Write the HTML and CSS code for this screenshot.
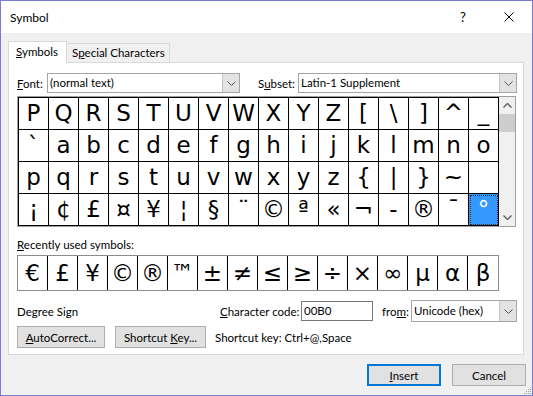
FILE: index.html
```html
<!DOCTYPE html>
<html lang="en">
<head>
    <meta charset="UTF-8">
    <meta name="viewport" content="width=device-width, initial-scale=1.0">
    <title>Symbol</title>
    <link rel="stylesheet" href="styles.css">
</head>
<body>
    <div class="window">
        <div class="titlebar">
            <span class="title">Symbol</span>
            <span class="caption-btn help">?</span>
            <span class="caption-btn">
                <svg width="10" height="10" viewBox="0 0 10 10"><path d="M0.5 0.5L9.5 9.5M9.5 0.5L0.5 9.5" stroke="#000" stroke-width="1" fill="none"/></svg>
            </span>
        </div>

        <div class="tabs">
            <div class="tab active"><u>S</u>ymbols</div>
            <div class="tab">S<u>p</u>ecial Characters</div>
        </div>

        <div class="panel">
            <div class="selects">
                <span class="lbl-font"><u>F</u>ont:</span>
                <div class="combo combo-font">
                    <span class="value">(normal text)</span>
                    <span class="drop"><svg width="9" height="5" viewBox="0 0 9 5"><path d="M0.5 0.5L4.5 4.5L8.5 0.5" fill="none" stroke="#555"/></svg></span>
                </div>
                <span class="lbl-subset">S<u>u</u>bset:</span>
                <div class="combo combo-subset">
                    <span class="value">Latin-1 Supplement</span>
                    <span class="drop"><svg width="9" height="5" viewBox="0 0 9 5"><path d="M0.5 0.5L4.5 4.5L8.5 0.5" fill="none" stroke="#555"/></svg></span>
                </div>
            </div>

            <div class="chars">
                <div class="grid">
                    <span>P</span><span>Q</span><span>R</span><span>S</span><span>T</span><span>U</span><span>V</span><span>W</span>
                    <span>X</span><span>Y</span><span>Z</span><span>[</span><span>\</span><span>]</span><span>^</span><span>_</span>
                    <span>`</span><span>a</span><span>b</span><span>c</span><span>d</span><span>e</span><span>f</span><span>g</span>
                    <span>h</span><span>i</span><span>j</span><span>k</span><span>l</span><span>m</span><span>n</span><span>o</span>
                    <span>p</span><span>q</span><span>r</span><span>s</span><span>t</span><span>u</span><span>v</span><span>w</span>
                    <span>x</span><span>y</span><span>z</span><span>{</span><span>|</span><span>}</span><span>~</span><span></span>
                    <span>¡</span><span>¢</span><span>£</span><span>¤</span><span>¥</span><span>¦</span><span>§</span><span>¨</span>
                    <span>©</span><span>ª</span><span>«</span><span>¬</span><span>-</span><span>®</span><span>¯</span><span class="sel">°</span>
                </div>
                <div class="scrollbar">
                    <span class="arrow"><svg width="9" height="5" viewBox="0 0 9 5"><path d="M0.5 4.5L4.5 0.5L8.5 4.5" fill="none" stroke="#606060" stroke-width="1.4"/></svg></span>
                    <span class="thumb"></span>
                    <span class="track"></span>
                    <span class="arrow"><svg width="9" height="5" viewBox="0 0 9 5"><path d="M0.5 0.5L4.5 4.5L8.5 0.5" fill="none" stroke="#606060" stroke-width="1.4"/></svg></span>
                </div>
            </div>

            <div class="recent-label"><u>R</u>ecently used symbols:</div>
            <div class="recent">
                <span>€</span><span>£</span><span>¥</span><span>©</span><span>®</span><span>™</span><span>±</span><span>≠</span>
                <span>≤</span><span>≥</span><span>÷</span><span>×</span><span>∞</span><span>µ</span><span>α</span><span>β</span>
            </div>

            <div class="info">
                <span class="degree">Degree Sign</span>
                <span class="lbl-code"><u>C</u>haracter code:</span>
                <span class="code-input">00B0</span>
                <span class="lbl-from">fro<u>m</u>:</span>
                <div class="combo combo-from">
                    <span class="value">Unicode (hex)</span>
                    <span class="drop"><svg width="9" height="5" viewBox="0 0 9 5"><path d="M0.5 0.5L4.5 4.5L8.5 0.5" fill="none" stroke="#555"/></svg></span>
                </div>
            </div>

            <div class="actions">
                <button class="btn btn-auto"><u>A</u>utoCorrect...</button>
                <button class="btn btn-key">Shortcut <u>K</u>ey...</button>
                <span class="shortcut">Shortcut key: Ctrl+@,Space</span>
            </div>
        </div>

        <div class="footer">
            <button class="btn btn-main default"><u>I</u>nsert</button>
            <button class="btn btn-main">Cancel</button>
        </div>

        <svg class="grip" width="10" height="10" viewBox="0 0 10 10">
            <rect x="8" y="2" width="1" height="1" fill="#a0a0a0"/>
            <rect x="6" y="4" width="1" height="1" fill="#a0a0a0"/>
            <rect x="8" y="4" width="1" height="1" fill="#a0a0a0"/>
            <rect x="4" y="6" width="1" height="1" fill="#a0a0a0"/>
            <rect x="6" y="6" width="1" height="1" fill="#a0a0a0"/>
            <rect x="8" y="6" width="1" height="1" fill="#a0a0a0"/>
            <rect x="2" y="8" width="1" height="1" fill="#a0a0a0"/>
            <rect x="4" y="8" width="1" height="1" fill="#a0a0a0"/>
            <rect x="6" y="8" width="1" height="1" fill="#a0a0a0"/>
            <rect x="8" y="8" width="1" height="1" fill="#a0a0a0"/>
        </svg>
    </div>
</body>
</html>
```

FILE: styles.css
```css
* {
    box-sizing: border-box;
}
body {
    margin: 0;
    background: #fff;
}
.window {
    position: relative;
    width: 533px;
    height: 396px;
    border: 1px solid #7b7bd4;
    background: #f0f0f0;
    font-family: Lato, "Noto Sans", sans-serif;
    font-size: 11.5px;
    color: #000;
    white-space: nowrap;
    display: flex;
    flex-direction: column;
}
u {
    text-decoration: underline;
    text-underline-offset: 1px;
}

/* title bar */
.titlebar {
    height: 32px;
    flex-shrink: 0;
    background: #fff;
    display: flex;
    align-items: center;
}
.title {
    flex: 1;
    padding-left: 9px;
    font-size: 12px;
}
.caption-btn {
    width: 46px;
    height: 32px;
    display: flex;
    align-items: center;
    justify-content: center;
}
.help {
    font-size: 13px;
}

/* tabs */
.tabs {
    display: flex;
    align-items: flex-end;
    margin: 8px 0 0 7px;
}
.tab {
    height: 19px;
    width: 103px;
    padding-left: 5px;
    line-height: 17px;
    background: #f0f0f0;
    border-top: 1px solid #d9d9d9;
    border-right: 1px solid #d9d9d9;
}
.tab.active {
    position: relative;
    z-index: 1;
    height: 22px;
    width: 59px;
    padding-left: 7px;
    line-height: 19px;
    margin-bottom: -1px;
    background: #fff;
    border-left: 1px solid #d9d9d9;
}

.panel {
    margin-left: 7px;
    width: 516px;
    height: 293px;
    flex-shrink: 0;
    background: #fff;
    border: 1px solid #d9d9d9;
    padding-left: 8px;
}

/* combos */
.selects {
    display: flex;
    align-items: center;
    height: 20px;
    margin-top: 10px;
}
.lbl-font {
    width: 30px;
}
.lbl-subset {
    width: 40px;
    margin-left: 18px;
}
.combo {
    display: flex;
    height: 20px;
    border: 1px solid #a5a5a5;
    background: #fff;
}
.combo .value {
    flex: 1;
    padding-left: 2px;
    line-height: 18px;
}
.combo .drop {
    width: 17px;
    background: #e3e3e3;
    border-left: 1px solid #c4c4c4;
    display: flex;
    align-items: center;
    justify-content: center;
}
.combo-font {
    width: 193px;
}
.combo-subset {
    width: 219px;
}

/* character grid */
.chars {
    display: flex;
    width: 499px;
    margin-top: 3px;
    border: 1px solid #a0a0a0;
}
.grid {
    display: grid;
    grid-template-columns: repeat(16, 30px);
    border-left: 1px solid #000;
    border-top: 1px solid #000;
}
.grid span,
.recent span {
    font-family: "DejaVu Sans", sans-serif;
    font-size: 23px;
    text-align: center;
}
.grid span {
    height: 32px;
    line-height: 31px;
    border-right: 1px solid #000;
    border-bottom: 1px solid #000;
}
.grid .sel {
    background: #3399ff;
    color: #fff;
    outline: 1px dotted #333;
    outline-offset: -2px;
}
.scrollbar {
    width: 16px;
    background: #f0f0f0;
    display: flex;
    flex-direction: column;
}
.scrollbar .arrow {
    height: 17px;
    display: flex;
    align-items: center;
    justify-content: center;
}
.scrollbar .thumb {
    height: 18px;
    background: #cdcdcd;
}
.scrollbar .track {
    flex: 1;
}

/* recently used */
.recent-label {
    margin-top: 10px;
    line-height: 16px;
}
.recent {
    display: flex;
    width: 482px;
    height: 36px;
    margin-top: 2px;
    border: 1px solid #8c8c8c;
}
.recent span {
    width: 30px;
    height: 34px;
    line-height: 34px;
    border-right: 1px solid #000;
}
.recent span:last-child {
    border-right: none;
}

/* info row */
.info {
    display: flex;
    align-items: center;
    height: 22px;
    margin-top: 9px;
}
.degree {
    width: 203px;
}
.lbl-code {
    width: 81px;
}
.code-input {
    width: 72px;
    height: 20px;
    border: 1px solid #7a7a7a;
    padding-left: 2px;
    line-height: 18px;
}
.lbl-from {
    width: 29px;
    margin-left: 9px;
}
.combo-from {
    width: 106px;
    height: 22px;
}
.combo-from .value {
    line-height: 20px;
}

/* buttons */
.actions {
    display: flex;
    align-items: center;
    height: 22px;
    margin-top: 4px;
}
.btn {
    height: 22px;
    padding: 0;
    background: #e1e1e1;
    border: 1px solid #adadad;
    font-family: inherit;
    font-size: 11.5px;
    color: #000;
}
.btn-auto {
    width: 88px;
}
.btn-key {
    width: 91px;
    margin-left: 10px;
}
.shortcut {
    margin-left: 9px;
}
.footer {
    display: flex;
    justify-content: flex-end;
    gap: 11px;
    margin-top: 9px;
    padding-right: 6px;
}
.btn-main {
    width: 74px;
}
.btn.default {
    border: 2px solid #0078d7;
}
.grip {
    position: absolute;
    right: 0;
    bottom: 0;
}
```
